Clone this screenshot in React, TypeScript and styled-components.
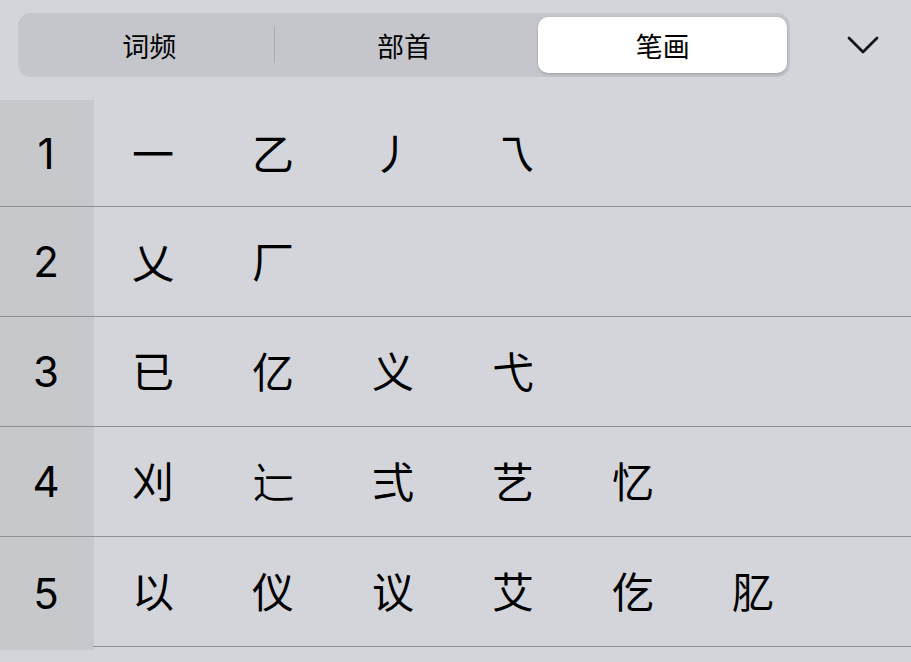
import styled, { createGlobalStyle } from "styled-components";

const GlobalStyle = createGlobalStyle`
    html, body {
        margin: 0;
        padding: 0;
        background: #d4d5da;
    }
    body {
        font-family: "Noto Sans CJK SC", "Noto Sans", sans-serif;
        color: #000;
    }
`;

const tabs = ["词频", "部首", "笔画"];
const selectedTab = 2;

const rows: { count: number; chars: string[] }[] = [
    { count: 1, chars: ["一", "乙", "丿", "乁"] },
    { count: 2, chars: ["乂", "厂"] },
    { count: 3, chars: ["已", "亿", "义", "弋"] },
    { count: 4, chars: ["刈", "辷", "弍", "艺", "忆"] },
    { count: 5, chars: ["以", "仪", "议", "艾", "仡", "肊"] },
];

export default function App() {
    return (
        <>
            <GlobalStyle />
            <Page>
                <Header>
                    <Segmented>
                        {tabs.map((t, i) => (
                            <Segment key={t} $active={i === selectedTab}>
                                {t}
                                {i < tabs.length - 1 && i !== selectedTab && i + 1 !== selectedTab && <Divider />}
                            </Segment>
                        ))}
                    </Segmented>
                    <Toggle>
                        <svg width="32" height="20" viewBox="0 0 32 20" fill="none">
                            <path d="M2 3 L16 17 L30 3" stroke="#111" strokeWidth="2.8" strokeLinecap="round" strokeLinejoin="round" />
                        </svg>
                    </Toggle>
                </Header>
                <List>
                    {rows.map((r) => (
                        <Row key={r.count}>
                            <Count>{r.count}</Count>
                            <Cells>
                                {r.chars.map((c) => (
                                    <Cell key={c}>{c}</Cell>
                                ))}
                            </Cells>
                        </Row>
                    ))}
                </List>
            </Page>
        </>
    );
}

const Page = styled.div`
    width: 911px;
    height: 662px;
    overflow: hidden;
    background: #d4d5da;
`;

const Header = styled.div`
    height: 100px;
    display: flex;
    align-items: flex-start;
    padding: 13px 0 0 18px;
    box-sizing: border-box;
`;

const Segmented = styled.div`
    width: 772px;
    height: 64px;
    box-sizing: border-box;
    padding: 4px;
    background: #c5c6cb;
    border-radius: 13px;
    display: grid;
    grid-template-columns: 1fr 1fr 1fr;
`;

const Segment = styled.div<{ $active: boolean }>`
    position: relative;
    display: flex;
    align-items: center;
    justify-content: center;
    font-size: 27px;
    border-radius: 10px;
    margin: ${(p) => (p.$active ? "0 -1px 0 7px" : "0")};
    background: ${(p) => (p.$active ? "#ffffff" : "transparent")};
    box-shadow: ${(p) => (p.$active ? "0 2px 3px rgba(0,0,0,0.12), 0 0 0 1px rgba(0,0,0,0.03)" : "none")};
`;

const Divider = styled.span`
    position: absolute;
    right: 2px;
    top: 10px;
    bottom: 10px;
    width: 1px;
    background: #a9aaaf;
`;

const Toggle = styled.div`
    width: 121px;
    height: 64px;
    display: flex;
    align-items: center;
    justify-content: center;
    padding-left: 24px;
    box-sizing: border-box;
`;

const List = styled.div`
    display: flex;
    flex-direction: column;
`;

const Row = styled.div`
    display: flex;
    height: 110px;
    border-bottom: 1px solid #8e8e93;
    box-sizing: border-box;

    &:first-child {
        height: 107px;
    }

    &:last-child {
        border-bottom: none;
        height: 113px;
    }

    &:last-child > div:last-child {
        height: 110px;
        border-bottom: 1px solid #8e8e93;
        box-sizing: border-box;
    }
`;

const Count = styled.div`
    width: 94px;
    flex-shrink: 0;
    background: #c7c8cc;
    display: flex;
    align-items: center;
    justify-content: center;
    font-family: Inter, "Liberation Sans", sans-serif;
    font-size: 42px;
    padding-right: 2px;
    box-sizing: border-box;
`;

const Cells = styled.div`
    flex: 1;
    display: flex;
    align-items: center;
    margin-left: -1px;
`;

const Cell = styled.div`
    width: 120px;
    text-align: center;
    font-size: 42px;
    line-height: 1;
    padding-bottom: 3px;
`;
